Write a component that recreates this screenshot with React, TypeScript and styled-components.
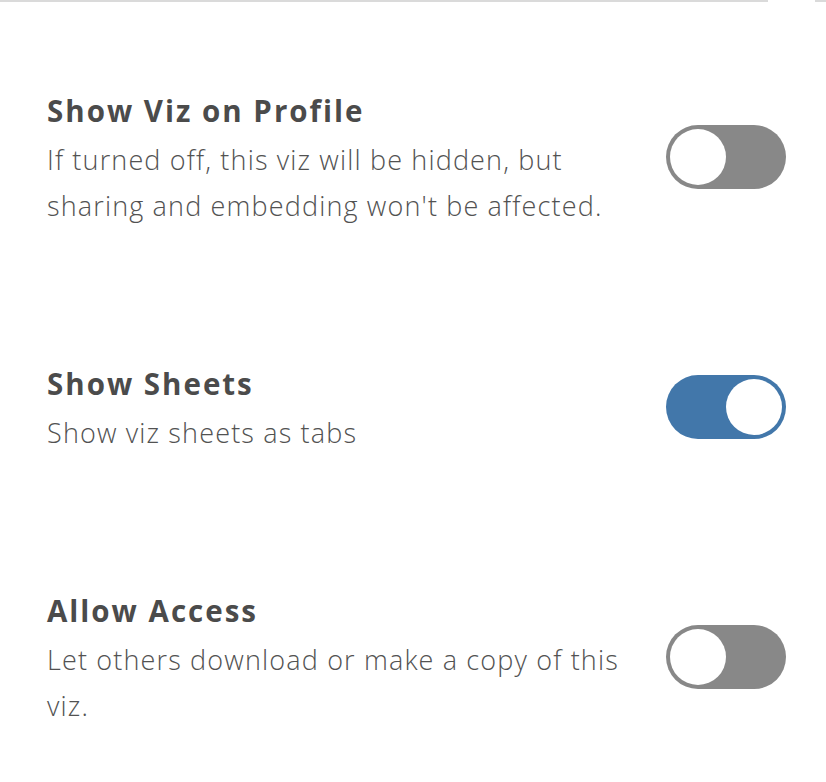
import React, { useState } from "react";
import styled, { createGlobalStyle } from "styled-components";

const Global = createGlobalStyle`
  html, body { margin: 0; padding: 0; background: #ffffff; }
  body { font-family: "Open Sans", "Liberation Sans", sans-serif; color: #4f4f4f; }
  * { box-sizing: border-box; }
`;

const Page = styled.div`
  width: 826px;
  height: 782px;
  background: #fff;
  display: flex;
  flex-direction: column;
`;

const TopRule = styled.div`
  display: flex;
  height: 2px;
  gap: 47px;
`;

const RuleSegment = styled.div<{ $width?: number }>`
  height: 2px;
  background: #dadada;
  ${(p) => (p.$width ? `width: ${p.$width}px;` : "flex: 1;")}
`;

const List = styled.div`
  display: flex;
  flex-direction: column;
  gap: 137px;
  padding: 91px 40px 0 47px;
`;

const Row = styled.div`
  display: flex;
  align-items: center;
  justify-content: space-between;
`;

const TextCol = styled.div`
  width: 596px;
  display: flex;
  flex-direction: column;
  gap: 8px;
`;

const Title = styled.div`
  font-size: 29.5px;
  font-weight: 700;
  line-height: 36px;
  letter-spacing: 2px;
  color: #4b4b4b;
`;

const Desc = styled.div`
  font-size: 27px;
  font-weight: 300;
  line-height: 46px;
  letter-spacing: 1.15px;
  color: #525252;
`;

const Track = styled.button<{ $on: boolean }>`
  flex: none;
  position: relative;
  width: 120px;
  height: 64px;
  margin-bottom: 8px;
  border-radius: 32px;
  border: none;
  padding: 0;
  cursor: pointer;
  background: ${(p) => (p.$on ? "#4277aa" : "#888888")};
`;

const Knob = styled.span<{ $on: boolean }>`
  position: absolute;
  top: 4px;
  left: ${(p) => (p.$on ? "60px" : "4px")};
  width: 56px;
  height: 56px;
  border-radius: 50%;
  background: #ffffff;
`;

const Toggle = ({ initial }: { initial: boolean }) => {
  const [on, setOn] = useState(initial);
  return (
    <Track $on={on} onClick={() => setOn(!on)} aria-pressed={on}>
      <Knob $on={on} />
    </Track>
  );
};

const items = [
  {
    title: "Show Viz on Profile",
    desc: "If turned off, this viz will be hidden, but sharing and embedding won't be affected.",
    on: false,
  },
  { title: "Show Sheets", desc: "Show viz sheets as tabs", on: true },
  {
    title: "Allow Access",
    desc: "Let others download or make a copy of this viz.",
    on: false,
  },
];

export default function App() {
  return (
    <Page>
      <Global />
      <TopRule>
        <RuleSegment $width={768} />
        <RuleSegment />
      </TopRule>
      <List>
        {items.map((it) => (
          <Row key={it.title}>
            <TextCol>
              <Title>{it.title}</Title>
              <Desc>{it.desc}</Desc>
            </TextCol>
            <Toggle initial={it.on} />
          </Row>
        ))}
      </List>
    </Page>
  );
}
